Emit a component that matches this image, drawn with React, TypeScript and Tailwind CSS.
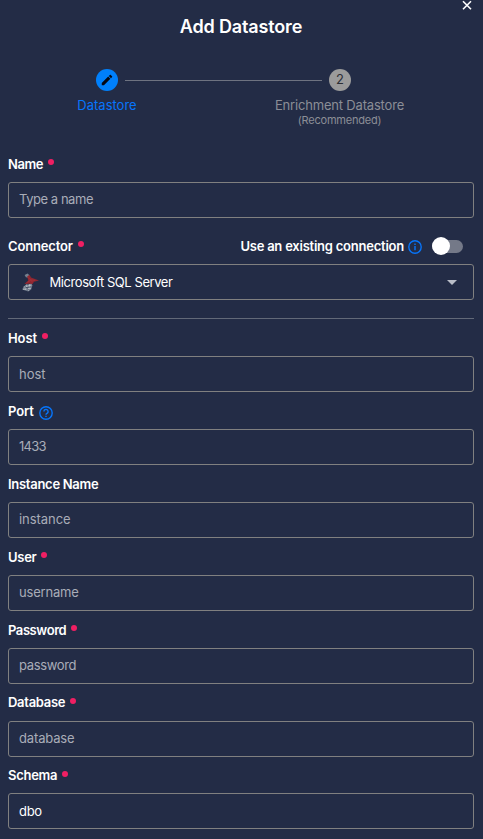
import type { ReactNode } from "react";

function Dot() {
  return <span className="mb-[5px] ml-[5px] size-1.5 shrink-0 rounded-full bg-[#f01f63]" />;
}

type FieldProps = {
  label: string;
  labelClass?: string;
  text: string;
  textClass?: string;
  required?: boolean;
  rowClass?: string;
  filled?: boolean;
  extra?: ReactNode;
};

function Field({ label, labelClass = "tracking-[-0.28px]", text, textClass = "", required, rowClass = "h-[37px]", filled, extra }: FieldProps) {
  return (
    <div>
      <div className={`flex items-center pt-0.5 ${rowClass}`}>
        <span className={`text-[13px] font-semibold text-white ${labelClass}`}>{label}</span>
        {required && <Dot />}
        {extra}
      </div>
      <div className="flex h-9 items-center rounded-[3px] border border-[#808080] pl-2.5">
        <span className={`text-[13px] ${filled ? "text-white" : "text-[#a9adb8]"} ${textClass}`}>{text}</span>
      </div>
    </div>
  );
}

function SqlServerLogo() {
  return (
    <svg className="ml-[12px] shrink-0" width="19" height="19" viewBox="0 0 19 19" fill="none">
      <path d="M3.6 2 6.5.6l2 1.6-.6 2.6-3-.6Z" fill="#76808f" />
      <path d="M6.2 3.6 8.6 1.8 10 4.4l8 3.1-5 1.2-1.6 2.6-3-.6-5 .4 3.8-3.6Z" fill="#8e2630" />
      <path d="m6.6 4 3 2.8 4.6.6M6.4 9.6 9.6 7l2 2.2" stroke="#ae343d" strokeWidth=".6" />
      <path d="m5.4 11.4 5-.6 1 1.6-1.2 4.2-3 1.8-6-1.8 1.4-3Z" fill="#6c7788" />
      <path d="m3 14 7.6-2M2 16.3l8-1M5.4 11.6l-1.2 5.4M8.8 11l-1.2 6.8" stroke="#bcc3ca" strokeWidth=".8" />
      <path d="m4 15 5-1M3.8 13l3.8 3.8" stroke="#344055" strokeWidth=".6" />
    </svg>
  );
}

export default function App() {
  return (
    <main className="relative h-[839px] w-[483px] overflow-hidden bg-[#232c46] px-2 font-['Inter','Noto_Sans',sans-serif]">
      <button aria-label="Close" className="absolute top-0 left-[462px] size-[10px] text-white">
        <svg width="10" height="10" viewBox="0 0 10 10" stroke="currentColor" strokeWidth="1.6">
          <path d="m1 1.3 8 8M9 1.3l-8 8" />
        </svg>
      </button>

      <header className="flex h-[69px] justify-center pt-[13px]">
        <h1 className="mr-px h-7 text-lg leading-7 font-semibold tracking-[-0.15px] text-white">Add Datastore</h1>
      </header>

      <div className="flex h-[76px] pl-[88px]">
        <div className="flex w-[22px] shrink-0 flex-col items-center">
          <span className="flex size-[22px] items-center justify-center rounded-full bg-[#0080fc]">
            <svg width="14" height="14" viewBox="0 0 24 24" fill="#050914">
              <path d="M20.71 7.04c.39-.39.39-1.04 0-1.41l-2.34-2.34c-.37-.39-1.02-.39-1.41 0l-1.84 1.83 3.75 3.75M3 17.25V21h3.75L17.81 9.93l-3.75-3.75L3 17.25Z" />
            </svg>
          </span>
          <span className="mt-1 text-[13px] leading-5 whitespace-nowrap text-[#0775fb]">Datastore</span>
        </div>
        <div className="mt-[11px] ml-[7px] h-px w-[197px] shrink-0 bg-[#6e7381]" />
        <div className="ml-[7px] flex w-[22px] shrink-0 flex-col items-center">
          <span className="flex size-[22px] shrink-0 items-center justify-center rounded-full bg-[#9b9b9b] text-[13px] text-[#2b2e35]">2</span>
          <span className="mt-1 -ml-px text-[13px] leading-5 tracking-[-0.18px] whitespace-nowrap text-[#8b8e96]">Enrichment Datastore</span>
          <span className="-mt-px -ml-px text-[11px] leading-[12px] tracking-[-0.2px] whitespace-nowrap text-[#8b8e96]">(Recommended)</span>
        </div>
      </div>

      <form className="w-[466px]">
        <Field label="Name" labelClass="tracking-[-0.4px]" text="Type a name" textClass="tracking-[-0.45px]" required />

        <div className="flex h-[46px] items-center pt-[11px]">
          <span className="text-[13px] font-semibold tracking-[-0.16px] text-white">Connector</span>
          <Dot />
          <span className="ml-auto text-[13px] font-semibold tracking-[-0.23px] whitespace-nowrap text-white">Use an existing connection</span>
          <svg className="mt-px ml-[4px]" width="14" height="14" viewBox="0 0 14 14" fill="none" stroke="#0775fb" strokeWidth="1.4">
            <circle cx="7" cy="7" r="6.2" />
            <path d="M7 6v4.2M7 3.6v1.3" />
          </svg>
          <span className="relative mr-[11px] mb-px ml-[10px] h-[13px] w-[31px] rounded-full bg-[#747988]">
            <span className="absolute top-[-3px] left-0 size-[18px] rounded-full bg-white" />
          </span>
        </div>
        <div className="flex h-9 items-center rounded-[3px] border border-[#808080]">
          <SqlServerLogo />
          <span className="mt-px ml-[9.5px] text-[13px] tracking-[-0.43px] text-white">Microsoft SQL Server</span>
          <span className="mt-px mr-4 ml-auto h-[5px] w-[10px] bg-[#babec8] [clip-path:polygon(0_0,100%_0,50%_100%)]" />
        </div>
        <div className="mt-[18px] h-px bg-[#626978]" />

        <Field label="Host" labelClass="tracking-[-0.1px]" text="host" textClass="pt-px" required />
        <Field
          label="Port"
          labelClass="tracking-[-0.1px]"
          text="1433"
          textClass="tracking-[-0.7px]"
          extra={
            <svg className="mt-[2px] ml-[5px]" width="14" height="14" viewBox="0 0 14 14" fill="none" stroke="#0775fb" strokeWidth="1.4">
              <circle cx="7" cy="7" r="6.2" />
              <path d="M4.9 5.4a2.1 2.1 0 1 1 3.4 1.7C7.4 7.7 7 8 7 8.7M7 9.7V11" />
            </svg>
          }
        />
        <Field label="Instance Name" text="instance" textClass="tracking-[-0.05px]" />
        <Field label="User" text="username" textClass="tracking-[-0.2px]" required />
        <Field label="Password" labelClass="tracking-[-0.42px]" text="password" textClass="tracking-[-0.35px]" required />
        <Field label="Database" text="database" textClass="tracking-[-0.15px]" required rowClass="h-[37px] pb-px" />
        <Field label="Schema" text="dbo" textClass="pt-px tracking-[-0.3px]" required filled rowClass="h-9" />
      </form>
    </main>
  );
}
